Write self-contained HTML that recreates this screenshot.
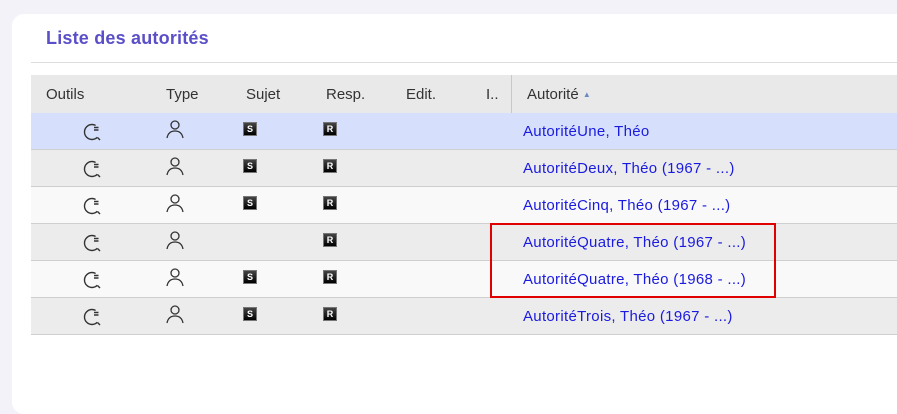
<!DOCTYPE html>
<html><head><meta charset="utf-8"><style>
body{margin:0;width:897px;height:404px;background:#f2f2f8;font-family:"Liberation Sans",sans-serif;overflow:hidden;position:relative}
.card{position:absolute;left:12px;top:14px;width:900px;height:400px;background:#fff;border-radius:12px}
.title{position:absolute;left:46px;top:28px;font-size:18px;font-weight:bold;color:#5a4fc8;letter-spacing:0.2px}
.hr{position:absolute;left:31px;top:62px;width:866px;height:1px;background:#ddd}
.row{position:absolute;left:31px;width:866px;height:36px;border-bottom:1px solid #cfcfcf;font-size:15px}
.hd{top:75px;height:38px;background:#e9e9e9;border:none;color:#333}
.hd span{position:absolute;top:11px}
.ic{position:absolute}
.bx{position:absolute;top:9px;width:14px;height:14px;background:linear-gradient(#444,#000);color:#fff;font-size:9px;font-weight:bold;text-align:center;line-height:13px;border:1px solid #777;box-sizing:border-box}
.ln{position:absolute;left:492px;top:10px;color:#1a1ae0;letter-spacing:0.3px}
</style></head><body>
<div class="card"></div>
<div class="title">Liste des autorités</div>
<div class="hr"></div>
<div class="row hd"><span style="left:15px">Outils</span><span style="left:135px">Type</span><span style="left:215px">Sujet</span><span style="left:295px">Resp.</span><span style="left:375px">Edit.</span><span style="left:455px">I..</span><div style="position:absolute;left:480px;top:0;width:1px;height:38px;background:#c8c8c8"></div><span style="left:496px">Autorité <span style="font-size:8px;color:#6a8ac0;position:relative;top:-2px">▲</span></span></div>
<div id="rows"></div>
<script>
var d=[["#d6e0fc","AutoritéUne, Théo",1],["#ececec","AutoritéDeux, Théo (1967 - ...)",1],["#f9f9f9","AutoritéCinq, Théo (1967 - ...)",1],["#ececec","AutoritéQuatre, Théo (1967 - ...)",0],["#f9f9f9","AutoritéQuatre, Théo (1968 - ...)",1],["#ececec","AutoritéTrois, Théo (1967 - ...)",1]];
var h="";d.forEach(function(r,i){h+='<div class="row" style="top:'+(113+i*37)+'px;background:'+r[0]+'">'+
'<svg class="ic" style="left:51px;top:7px" width="24" height="24" viewBox="0 0 24 24" fill="none" stroke="#333" stroke-width="1.4"><circle cx="10" cy="12" r="7.5" stroke-dasharray="33 14.2" transform="rotate(45 10 12)"/><path d="M12 7.5h4.5M12 10h4.5"/><path d="M15.5 17.5l2.5 2.5"/></svg>'+
'<svg class="ic" style="left:134px;top:6px" width="20" height="22" viewBox="0 0 20 22" fill="none" stroke="#333" stroke-width="1.3"><circle cx="10" cy="6" r="4"/><path d="M2 19c1-5 4-7 8-7s7 2 8 7"/></svg>'+
(r[2]?'<div class="bx" style="left:212px">S</div>':'')+'<div class="bx" style="left:292px">R</div>'+
'<div class="ln">'+r[1]+'</div></div>';});
document.getElementById("rows").innerHTML=h;
</script>
<div style="position:absolute;left:490px;top:223px;width:282px;height:71px;border:2px solid #e00000"></div>
</body></html>
